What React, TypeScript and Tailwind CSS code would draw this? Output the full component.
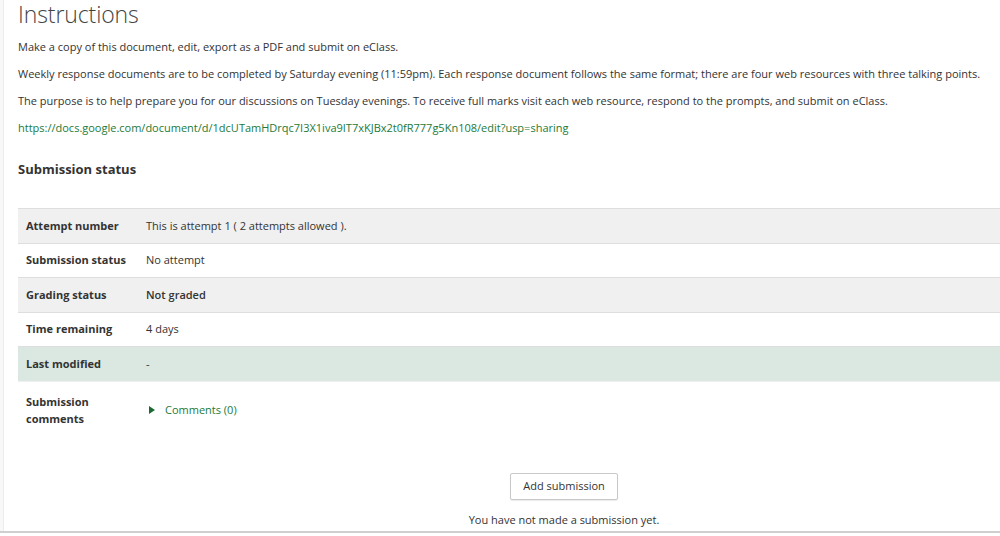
import { Fragment } from 'react'

const rows: { label: string; value: string; tone: 'gray' | 'white' | 'green'; bold?: boolean }[] = [
  { label: 'Attempt number', value: 'This is attempt 1 ( 2 attempts allowed ).', tone: 'gray' },
  { label: 'Submission status', value: 'No attempt', tone: 'white' },
  { label: 'Grading status', value: 'Not graded', tone: 'gray', bold: true },
  { label: 'Time remaining', value: '4 days', tone: 'white' },
  { label: 'Last modified', value: '-', tone: 'green' },
]

const toneClass = {
  gray: 'bg-[#f0f0f0]',
  white: 'bg-white',
  green: 'bg-[#dae8e1]',
}

export default function App() {
  return (
    <div
      className="h-[536px] w-[1000px] overflow-hidden bg-white text-[#333]"
      style={{ fontFamily: '"Open Sans", "Noto Sans", Arial, sans-serif' }}
    >
      <div className="flex h-[533px] border-b-2 border-[#cfcfcf]">
        <div className="w-[4px] shrink-0 border-r border-[#ececec] bg-[#f8f8f8]" />
        <div className="w-[1106px] shrink-0 pl-[14px]">
          <h2 className="text-[23px] font-light leading-[28px] tracking-[-0.1px] text-[#444]">Instructions</h2>
          <div className="mt-[11px] space-y-[11px] text-[11px] leading-[16px]">
            <p>Make a copy of this document, edit, export as a PDF and submit on eClass.</p>
            <p>
              Weekly response documents are to be completed by Saturday evening (11:59pm). Each response document
              follows the same format; there are four web resources with three talking points.
            </p>
            <p>
              The purpose is to help prepare you for our discussions on Tuesday evenings. To receive full marks
              visit each web resource, respond to the prompts, and submit on eClass.
            </p>
            <p className="text-[#1b7a3a]">
              https://docs.google.com/document/d/1dcUTamHDrqc7I3X1iva9IT7xKJBx2t0fR777g5Kn108/edit?usp=sharing
            </p>
          </div>
          <h3 className="mt-[24px] text-[13px] font-bold leading-[18px] text-[#333]">Submission status</h3>

          <div className="mt-[30px] grid grid-cols-[128px_1fr] text-[11px]">
            {rows.map((r) => (
              <Fragment key={r.label}>
                <div
                  className={`flex h-[34.6px] items-center border-t border-[#dedede] pl-[8px] font-bold ${toneClass[r.tone]}`}
                >
                  {r.label}
                </div>
                <div
                  className={`flex h-[34.6px] items-center border-t border-[#dedede] ${r.bold ? 'font-semibold' : ''} ${toneClass[r.tone]}`}
                >
                  {r.value}
                </div>
              </Fragment>
            ))}
            <div className="flex h-[57px] flex-col justify-center border-t border-[#f0f0f0] pl-[8px] font-bold leading-[17px]">
              <span>Submission</span>
              <span>comments</span>
            </div>
            <div className="flex h-[57px] items-center border-t border-[#f0f0f0] text-[#1b7a3a]">
              <svg width="6" height="8" viewBox="0 0 6 8" className="ml-[3px] mr-[10px]">
                <path d="M0 0 L6 4 L0 8 Z" fill="#1b6a35" />
              </svg>
              Comments (0)
            </div>
          </div>

          <div className="mt-[35px] flex flex-col items-center">
            <button className="h-[27px] rounded-[2px] border border-[#c8c8c8] bg-white px-[12px] text-[11px] text-[#333] shadow-[0_1px_1px_rgba(0,0,0,0.08)]">
              Add submission
            </button>
            <p className="mt-[12px] text-[11px]">You have not made a submission yet.</p>
          </div>
        </div>
      </div>
    </div>
  )
}
